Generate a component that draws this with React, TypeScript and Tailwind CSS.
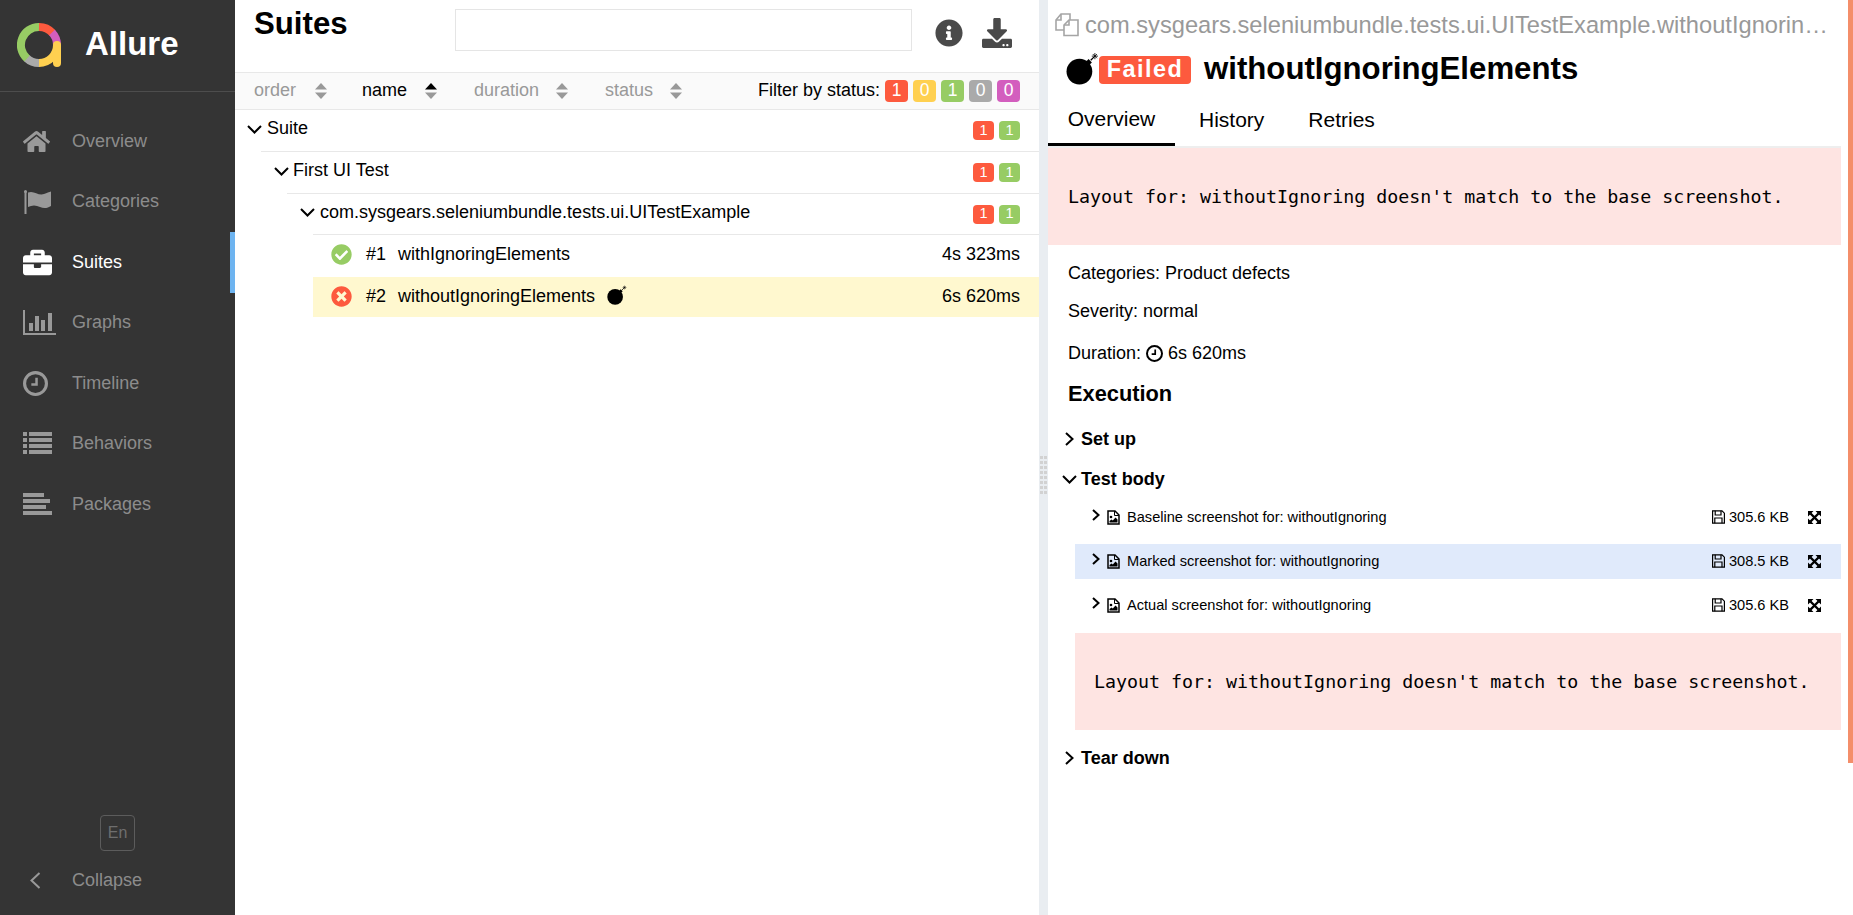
import React from 'react'
import { FaBriefcase, FaCheckCircle, FaDownload, FaHome, FaInfoCircle, FaTimesCircle } from 'react-icons/fa'

function Logo() {
  return (
    <svg width="46" height="46" viewBox="0 0 46 46" className="shrink-0">
      <g fill="none" strokeWidth="8">
        <path d="M22 4 A18 18 0 0 1 35.5 10" stroke="#fd5a3e" />
        <path d="M35 9.5 A18 18 0 0 1 40 22" stroke="#d35ebe" />
        <path d="M40 22 A18 18 0 0 1 22 40" stroke="#ffd050" />
        <path d="M22 40 A18 18 0 0 1 9.5 35" stroke="#aaaaaa" />
        <path d="M10 35.5 A18 18 0 0 1 22 4" stroke="#97cc64" />
        <path d="M40 22 V40" stroke="#ffd050" strokeLinecap="round" />
      </g>
    </svg>
  )
}

function ChevronDown({ className }: { className?: string }) {
  return (
    <svg width="15" height="9" viewBox="0 0 15 9" fill="none" stroke="currentColor" strokeWidth="2" className={`shrink-0 ${className ?? ''}`}>
      <path d="M1 1 L7.5 7.5 L14 1" />
    </svg>
  )
}

function ChevronRight({ w, h, className }: { w: number; h: number; className?: string }) {
  return (
    <svg width={w} height={h} viewBox={`0 0 ${w} ${h}`} fill="none" stroke="currentColor" strokeWidth="2" className={`shrink-0 ${className ?? ''}`}>
      <path d={`M1 1 L${w - 1.5} ${h / 2} L1 ${h - 1}`} />
    </svg>
  )
}

function FlagIcon() {
  return (
    <svg width="29" height="24" viewBox="0 0 29 24" fill="currentColor">
      <rect x="1.5" y="1" width="2" height="23" />
      <circle cx="2.5" cy="1.5" r="1.5" />
      <path d="M5 2.5 C11 0 15 6 21 4 C24 3 26 2 28 1.5 V16 C25 18 21 19 17 17 C13 15 9 15 5 17 Z" />
    </svg>
  )
}

function BarsIcon() {
  return (
    <svg width="33" height="25" viewBox="0 0 33 25" fill="currentColor">
      <rect x="0" y="0" width="2" height="25" />
      <rect x="0" y="23" width="33" height="2" />
      <rect x="6" y="13" width="4" height="8" />
      <rect x="12" y="6" width="4" height="15" />
      <rect x="18" y="10" width="4" height="11" />
      <rect x="25" y="3" width="4" height="18" />
    </svg>
  )
}

function ClockIcon({ size, stroke }: { size: number; stroke: number }) {
  return (
    <svg width={size} height={size} viewBox="0 0 24 24" fill="none" stroke="currentColor">
      <circle cx="12" cy="12" r={12 - stroke / 2} strokeWidth={stroke} />
      <path d="M13 6.5 V13 H8" strokeWidth="2.4" />
    </svg>
  )
}

function ListIcon() {
  return (
    <svg width="29" height="23" viewBox="0 0 29 23" fill="currentColor">
      {[0, 6, 12, 18].map((y) => (
        <g key={y}>
          <rect x="0" y={y} width="4" height="4" />
          <rect x="6" y={y} width="23" height="4" />
        </g>
      ))}
    </svg>
  )
}

function AlignIcon() {
  return (
    <svg width="29" height="23" viewBox="0 0 29 23" fill="currentColor">
      <rect x="0" y="0" width="21" height="4" />
      <rect x="0" y="6" width="27" height="4" />
      <rect x="0" y="12" width="23" height="4" />
      <rect x="0" y="18" width="29" height="4" />
    </svg>
  )
}

function SortArrows({ active }: { active?: boolean }) {
  return (
    <svg width="12" height="16" viewBox="0 0 12 16" className="shrink-0">
      <path d="M6 0 L12 6.5 H0 Z" fill={active ? '#000' : '#999'} />
      <path d="M6 16 L12 9.5 H0 Z" fill="#999" />
    </svg>
  )
}

function BombIcon({ size, className }: { size: number; className?: string }) {
  return (
    <svg width={size} height={size} viewBox="0 0 32 32" className={`shrink-0 ${className ?? ''}`}>
      <circle cx="13" cy="19" r="12.5" fill="#000" />
      <path d="M20 12 L23.5 8.5" stroke="#000" strokeWidth="4.5" />
      <path d="M24 8 L27 5" stroke="#000" strokeWidth="1.2" fill="none" />
      <path d="M28 1 V7 M25 4 H31 M26 2 L30 6 M30 2 L26 6" stroke="#000" strokeWidth="0.8" fill="none" />
    </svg>
  )
}

function CopyIcon() {
  return (
    <svg width="24" height="24" viewBox="0 0 24 24" fill="none" stroke="#a5a5a5" strokeWidth="1.6" className="shrink-0">
      <path d="M9 17 H1 V7 L6 1 H15 V7" />
      <path d="M1 7 H6 V1" />
      <path d="M9 12 L14 7 H23 V22.5 H9 Z" />
      <path d="M9 12 H14 V7" />
    </svg>
  )
}

function FileImageIcon() {
  return (
    <svg width="13" height="15" viewBox="0 0 13 15" className="shrink-0">
      <path d="M1 1 H8 L12 5 V14 H1 Z" fill="none" stroke="#000" strokeWidth="1.5" />
      <path d="M7.5 1 V5.5 H12" fill="none" stroke="#000" strokeWidth="1" />
      <circle cx="4" cy="7" r="1.3" fill="#000" />
      <path d="M2.5 12.5 V11 L4.5 9.5 L5.8 10.5 L8.5 7.5 L10.5 9.5 V12.5 Z" fill="#000" />
    </svg>
  )
}

function SaveIcon() {
  return (
    <svg width="13" height="14" viewBox="0 0 13 14" fill="none" stroke="#000" strokeWidth="1.2" className="shrink-0">
      <path d="M0.6 0.8 H10 L12.4 3.2 V13.2 H0.6 Z" />
      <path d="M3.2 0.8 V5 H9 V0.8" />
      <path d="M2.8 13.2 V8 H10 V13.2" />
    </svg>
  )
}

function ExpandIcon() {
  return (
    <svg width="13" height="13" viewBox="0 0 13 13" className="shrink-0">
      <path d="M0 0 H5.5 L0 5.5 Z M13 0 V5.5 L7.5 0 Z M0 13 V7.5 L5.5 13 Z M13 13 H7.5 L13 7.5 Z" fill="#000" />
      <path d="M2.5 2.5 L10.5 10.5 M10.5 2.5 L2.5 10.5" stroke="#000" strokeWidth="2.4" />
    </svg>
  )
}

function Badge({ color, value, big }: { color: string; value: number; big?: boolean }) {
  return (
    <span
      className={
        big
          ? 'flex h-[22px] w-[23px] items-center justify-center rounded-[4px] text-[17.5px] text-white'
          : 'flex h-[19px] w-[21px] items-center justify-center rounded-[4px] text-[14.5px] text-white'
      }
      style={{ backgroundColor: color }}
    >
      {value}
    </span>
  )
}

const navItems = [
  { name: 'Overview', icon: <FaHome size={27} /> },
  { name: 'Categories', icon: <FlagIcon /> },
  { name: 'Suites', icon: <FaBriefcase size={29} />, active: true },
  { name: 'Graphs', icon: <BarsIcon /> },
  { name: 'Timeline', icon: <ClockIcon size={25} stroke={3} /> },
  { name: 'Behaviors', icon: <ListIcon /> },
  { name: 'Packages', icon: <AlignIcon /> },
]

function Sidebar() {
  return (
    <aside className="flex h-full w-[235px] shrink-0 flex-col bg-[#343434]">
      <div className="flex h-[92px] items-center gap-[22px] border-b border-[#4d4d4d] pl-[17px]">
        <Logo />
        <span className="mb-[4px] text-[33px] font-bold text-white">Allure</span>
      </div>
      <nav className="flex flex-col pt-[19px]">
        {navItems.map((item) => (
          <div
            key={item.name}
            className={
              item.active
                ? 'flex h-[60.5px] items-center border-r-[5px] border-[#6eb4f0] pl-[23px] text-white'
                : 'flex h-[60.5px] items-center pl-[23px] text-[#999]'
            }
          >
            <span className="flex w-[49px] items-center">{item.icon}</span>
            <span className={item.active ? 'text-[18px] text-white' : 'text-[18px] text-[#8c8c8c]'}>{item.name}</span>
          </div>
        ))}
      </nav>
      <div className="mt-auto flex flex-col pb-[12px]">
        <div className="mb-[7px] ml-[100px] flex h-[36px] w-[35px] items-center justify-center rounded-[4px] border border-[#5c5c5c] text-[16px] text-[#6e6e6e]">
          En
        </div>
        <div className="flex h-[45px] items-center pl-[30px] text-[#999]">
          <span className="flex w-[42px]">
            <svg width="11" height="17" viewBox="0 0 11 17" fill="none" stroke="currentColor" strokeWidth="2">
              <path d="M9.5 1 L1.5 8.5 L9.5 16" />
            </svg>
          </span>
          <span className="text-[18px] text-[#8c8c8c]">Collapse</span>
        </div>
      </div>
    </aside>
  )
}

function SortItem({ label, active, width }: { label: string; active?: boolean; width: string }) {
  return (
    <div className={`flex items-center justify-between ${width}`}>
      <span className={active ? 'text-black' : 'text-[#999]'}>{label}</span>
      <SortArrows active={active} />
    </div>
  )
}

function SuiteRow({ label, indent, height, textGap, lineIndent }: { label: string; indent: string; height: string; textGap: string; lineIndent: string }) {
  return (
    <>
      <div className={`flex items-center pr-[19px] ${height} ${indent}`}>
        <ChevronDown className="mb-[3px] text-black" />
        <span className={`mb-[4px] text-[18px] text-black ${textGap}`}>{label}</span>
        <span className="ml-auto flex gap-[5px]">
          <Badge color="#fd5a3e" value={1} />
          <Badge color="#97cc64" value={1} />
        </span>
      </div>
      <div className={`h-px bg-[#e8e8e8] ${lineIndent}`} />
    </>
  )
}

function SuitesPane() {
  return (
    <section className="flex h-full w-[804px] shrink-0 flex-col bg-white">
      <header className="flex h-[72px] shrink-0 items-start pl-[19px]">
        <h2 className="mt-[6px] w-[201px] text-[31.2px] font-bold leading-[36px] text-black">Suites</h2>
        <div className="mt-[9px] h-[42px] w-[457px] border border-[#e5e5e5]" />
        <FaInfoCircle size={28} className="ml-[23px] mt-[19px] text-[#4a4a4a]" />
        <FaDownload size={30} className="ml-[19px] mt-[18px] text-[#4a4a4a]" />
      </header>
      <div className="flex h-[38px] shrink-0 items-center border-y border-[#e8e8e8] bg-[#fafafa] pb-[1px] pl-[19px] pr-[19px] text-[18px]">
        <SortItem label="order" width="w-[73px]" />
        <span className="w-[35px]" />
        <SortItem label="name" active width="w-[75px]" />
        <span className="w-[37px]" />
        <SortItem label="duration" width="w-[94px]" />
        <span className="w-[37px]" />
        <SortItem label="status" width="w-[77px]" />
        <div className="ml-auto flex items-center gap-[5px]">
          <span className="text-black">Filter by status:</span>
          <Badge big color="#fd5a3e" value={1} />
          <Badge big color="#ffd050" value={0} />
          <Badge big color="#97cc64" value={1} />
          <Badge big color="#aaaaaa" value={0} />
          <Badge big color="#d35ebe" value={0} />
        </div>
      </div>
      <SuiteRow label="Suite" height="h-[41px]" indent="pl-[12px]" textGap="ml-[5px]" lineIndent="ml-[26px]" />
      <SuiteRow label="First UI Test" height="h-[41px]" indent="pl-[39px]" textGap="ml-[4px]" lineIndent="ml-[52px]" />
      <SuiteRow
        label="com.sysgears.seleniumbundle.tests.ui.UITestExample"
        height="h-[40px]"
        indent="pl-[65px]"
        textGap="ml-[5px]"
        lineIndent="ml-[78px]"
      />
      <div className="ml-[78px] flex h-[42px] items-center pb-[3px] pl-[18px] pr-[19px] text-[18px] text-black">
        <FaCheckCircle size={21} className="shrink-0 text-[#97cc64]" />
        <span className="ml-[14px] w-[32px]">#1</span>
        <span>withIgnoringElements</span>
        <span className="ml-auto">4s 323ms</span>
      </div>
      <div className="ml-[78px] flex h-[40px] items-center bg-[#fff8cf] pb-[2px] pl-[18px] pr-[19px] text-[18px] text-black">
        <FaTimesCircle size={21} className="shrink-0 text-[#fd5a3e]" />
        <span className="ml-[14px] w-[32px]">#2</span>
        <span>withoutIgnoringElements</span>
        <BombIcon size={20} className="mb-[2px] ml-[12px]" />
        <span className="ml-auto">6s 620ms</span>
      </div>
    </section>
  )
}

function Divider() {
  return (
    <div className="flex h-full w-[9px] shrink-0 flex-col items-center gap-[2px] bg-[#e9edf1] pt-[456px]">
      {[0, 1, 2, 3, 4, 5, 6, 7].map((i) => (
        <div key={i} className="flex gap-[1px]">
          <span className="h-[3px] w-[3px] bg-[#d2d2d2]" />
          <span className="h-[3px] w-[3px] bg-[#d2d2d2]" />
        </div>
      ))}
    </div>
  )
}

function Attachment({ name, size, highlight }: { name: string; size: string; highlight?: boolean }) {
  return (
    <div
      className={
        highlight
          ? 'flex h-[35px] items-center bg-[#e0eafb] pl-[17px] pr-[20px] text-[14.6px] text-black'
          : 'flex h-[35px] items-center pl-[17px] pr-[20px] text-[14.6px] text-black'
      }
    >
      <ChevronRight w={8} h={12} className="mb-[5px]" />
      <span className="mb-[1px] ml-[7px] flex">
        <FileImageIcon />
      </span>
      <span className="ml-[7px]">{name}</span>
      <span className="mb-[1px] ml-auto mr-[4px] flex">
        <SaveIcon />
      </span>
      <span>{size}</span>
      <span className="mb-[1px] ml-[19px] flex">
        <ExpandIcon />
      </span>
    </div>
  )
}

function ErrorBlock({ className }: { className: string }) {
  return (
    <div className={`flex items-center bg-[#fee4e2] [font-family:'DejaVu_Sans_Mono',monospace] text-[18.29px] text-black ${className}`}>
      Layout for: withoutIgnoring doesn't match to the base screenshot.
    </div>
  )
}

function StepTitle({ label, open }: { label: string; open?: boolean }) {
  return (
    <div className="flex h-[40px] items-center text-[18px] font-bold text-black">
      <span className="flex w-[15px] justify-center">
        {open ? <ChevronDown /> : <ChevronRight w={9} h={14} />}
      </span>
      <span className="ml-[4px]">{label}</span>
    </div>
  )
}

function DetailPane() {
  return (
    <section className="flex h-full min-w-0 flex-1 bg-white">
      <div className="min-w-0 flex-1">
        <div className="flex h-[50px] items-center pl-[7px] text-[23.66px] text-[#999]">
          <span className="mr-[6px] flex">
            <CopyIcon />
          </span>
          <span className="truncate pr-[8px] pt-[2px]">com.sysgears.seleniumbundle.tests.ui.UITestExample.withoutIgnoringElements</span>
        </div>
        <div className="flex h-[40px] items-center pl-[18px]">
          <BombIcon size={33} className="mt-[-4px]" />
          <span className="flex h-[28px] w-[92px] shrink-0 items-center justify-center rounded-[4px] bg-[#fd5a3e] text-[23.4px] font-bold tracking-[1.5px] text-white">
            Failed
          </span>
          <h1 className="ml-[13px] mt-[-2px] text-[31.2px] font-bold leading-[36px] text-black">withoutIgnoringElements</h1>
        </div>
        <div className="flex h-[56px] text-[21px] text-black">
          <div className="flex h-[56px] w-[127px] items-center justify-center border-b-[3px] border-black pt-[5px]">Overview</div>
          <div className="flex h-[56px] items-center pl-[24px] pt-[3px]">History</div>
          <div className="flex h-[56px] items-center pl-[44px] pt-[3px]">Retries</div>
        </div>
        <ErrorBlock className="h-[99px] border-t-[2px] border-[#eeeeee] pl-[20px]" />
        <div className="pl-[20px] text-[18px] text-black">
          <p className="mt-[14px] leading-[28px]">Categories: Product defects</p>
          <p className="mt-[10px] leading-[28px]">Severity: normal</p>
          <p className="mt-[14px] flex items-center leading-[28px]">
            Duration:&nbsp;
            <ClockIcon size={17} stroke={2.8} />
            &nbsp;6s 620ms
          </p>
          <h3 className="mt-[12px] text-[21.8px] font-bold leading-[30px]">Execution</h3>
        </div>
        <div className="mt-[10px] pl-[14px]">
          <StepTitle label="Set up" />
          <StepTitle label="Test body" open />
        </div>
        <div className="ml-[27px] mt-[1px]">
          <div className="flex flex-col gap-[9px]">
            <Attachment name="Baseline screenshot for: withoutIgnoring" size="305.6 KB" />
            <Attachment name="Marked screenshot for: withoutIgnoring" size="308.5 KB" highlight />
            <Attachment name="Actual screenshot for: withoutIgnoring" size="305.6 KB" />
          </div>
          <ErrorBlock className="mt-[10px] h-[97px] pl-[19px]" />
        </div>
        <div className="mt-[8px] pl-[14px]">
          <StepTitle label="Tear down" />
        </div>
      </div>
      {/* scrollbar */}
      <div className="ml-[7px] h-[763px] w-[5px] shrink-0 bg-[#f48e6a]" />
    </section>
  )
}

export default function App() {
  return (
    <div className="flex h-screen w-full overflow-hidden bg-white [font-family:'Liberation_Sans',sans-serif]">
      <Sidebar />
      <SuitesPane />
      <Divider />
      <DetailPane />
    </div>
  )
}
